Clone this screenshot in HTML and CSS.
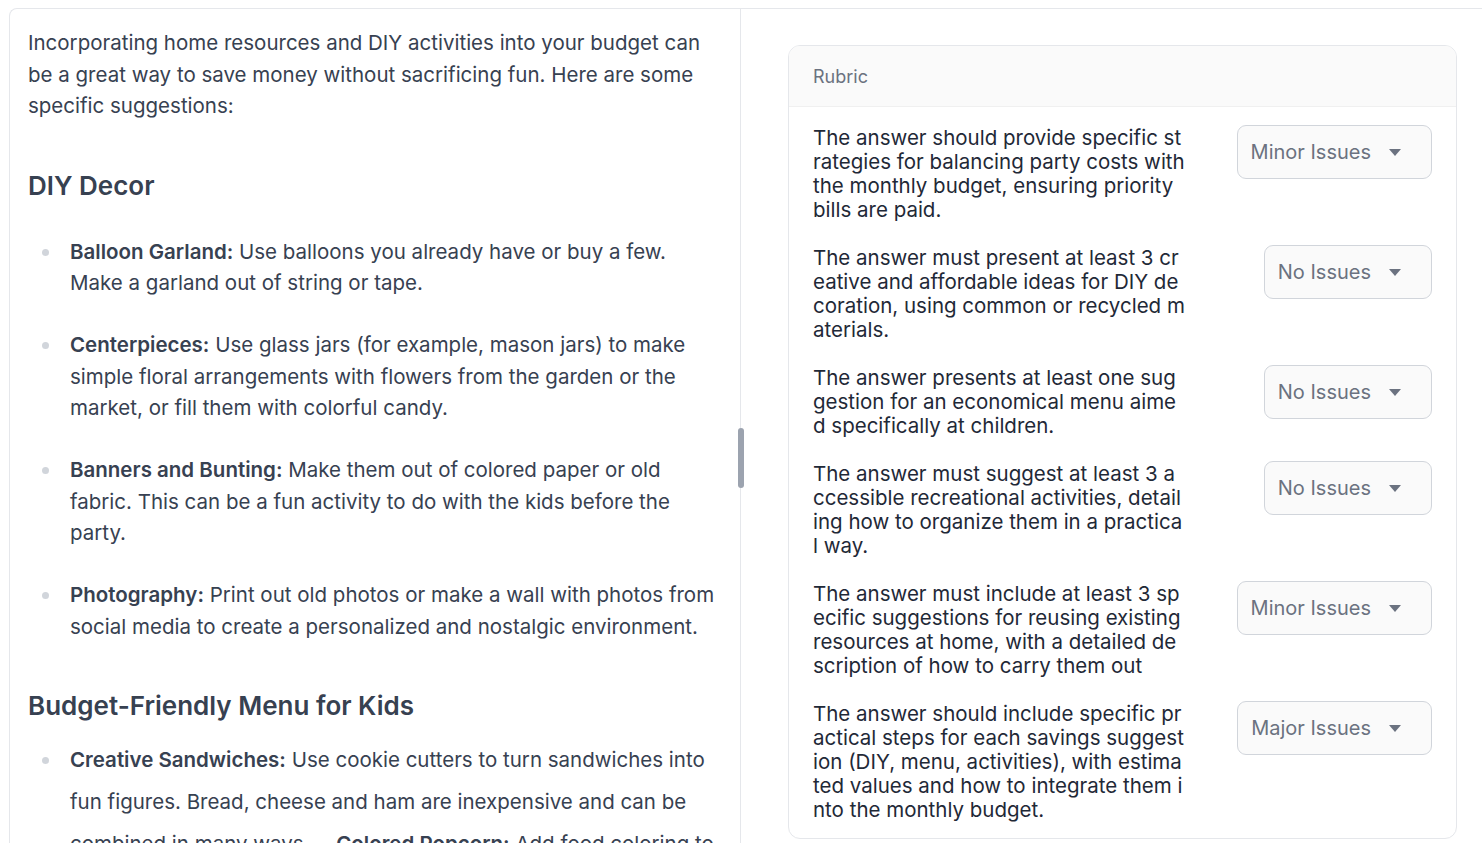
FILE: index.html
```html
<!DOCTYPE html>
<html lang="en">
<head>
<meta charset="utf-8">
<title>Rubric review</title>
<link rel="stylesheet" href="styles.css">
</head>
<body>
<div class="frame">
  <section class="answer">
    <div class="answer-scroll">
      <p class="intro">Incorporating home resources and DIY activities into your budget can be a great way to save money without sacrificing fun. Here are some specific suggestions:</p>
      <h2 class="h-first">DIY Decor</h2>
      <ul class="list list-first">
        <li><strong>Balloon Garland:</strong> Use balloons you already have or buy a few. Make a garland out of string or tape.</li>
        <li><strong>Centerpieces:</strong> Use glass jars (for example, mason jars) to make simple floral arrangements with flowers from the garden or the market, or fill them with colorful candy.</li>
        <li><strong>Banners and Bunting:</strong> Make them out of colored paper or old fabric. This can be a fun activity to do with the kids before the party.</li>
        <li><strong>Photography:</strong> Print out old photos or make a wall with photos from social media to create a personalized and nostalgic environment.</li>
      </ul>
      <h2 class="h-second">Budget-Friendly Menu for Kids</h2>
      <ul class="list list-second">
        <li><strong>Creative Sandwiches:</strong> Use cookie cutters to turn sandwiches into fun figures. Bread, cheese and ham are inexpensive and can be combined in many ways. &nbsp;- <strong>Colored Popcorn:</strong> Add food coloring to popcorn for a fun and colorful snack.</li>
      </ul>
    </div>
    <div class="scroll-thumb"></div>
  </section>
  <section class="review">
    <div class="card">
      <div class="card-head">Rubric</div>
      <div class="card-body">
        <div class="row">
          <div class="crit">The answer should provide specific strategies for balancing party costs with the monthly budget, ensuring priority bills are paid.</div>
          <div class="select">Minor Issues<span class="caret"></span></div>
        </div>
        <div class="row">
          <div class="crit">The answer must present at least 3 creative and affordable ideas for DIY decoration, using common or recycled materials.</div>
          <div class="select">No Issues<span class="caret"></span></div>
        </div>
        <div class="row">
          <div class="crit">The answer presents at least one suggestion for an economical menu aimed specifically at children.</div>
          <div class="select">No Issues<span class="caret"></span></div>
        </div>
        <div class="row">
          <div class="crit">The answer must suggest at least 3 accessible recreational activities, detailing how to organize them in a practical way.</div>
          <div class="select">No Issues<span class="caret"></span></div>
        </div>
        <div class="row">
          <div class="crit">The answer must include at least 3 specific suggestions for reusing existing resources at home, with a detailed description of how to carry them out</div>
          <div class="select">Minor Issues<span class="caret"></span></div>
        </div>
        <div class="row">
          <div class="crit">The answer should include specific practical steps for each savings suggestion (DIY, menu, activities), with estimated values and how to integrate them into the monthly budget.</div>
          <div class="select">Major Issues<span class="caret"></span></div>
        </div>
      </div>
    </div>
  </section>
</div>
</body>
</html>
```

FILE: styles.css
```css
* { box-sizing: border-box; }
html, body { margin: 0; padding: 0; background: #ffffff; overflow: hidden; }
body {
  font-family: Inter, "Noto Sans", "Liberation Sans", sans-serif;
  width: 1482px;
  height: 862px;
}
.frame {
  margin: 8px 0 0 9px;
  width: 1490px;
  height: 835px;
  border-top: 1px solid #e5e7eb;
  border-left: 1px solid #e5e7eb;
  border-top-left-radius: 8px;
  display: flex;
  overflow: hidden;
}
.answer {
  position: relative;
  width: 731px;
  flex: none;
  border-right: 1px solid #e5e7eb;
}
.answer-scroll {
  height: 100%;
  overflow: hidden;
  padding: 18px 18px 0 18px;
  color: #374151;
  font-size: 20.5px;
  line-height: 31.5px;
}
.intro { margin: 0; }
h2 {
  margin: 0;
  font-size: 26px;
  line-height: 34px;
  font-weight: 600;
  color: #374151;
}
.h-first { margin-top: 47px; }
.h-second { margin-top: 47px; }
.list {
  margin: 0;
  padding-left: 42px;
  list-style: none;
}
.list li { position: relative; }
.list li::before {
  content: "";
  position: absolute;
  left: -28px;
  top: 13px;
  width: 7px;
  height: 7px;
  border-radius: 50%;
  background: #d1d5db;
}
.list li + li { margin-top: 30.5px; }
.list strong { font-weight: 600; color: #374151; }
.list-first { margin-top: 33px; }
.list-second { margin-top: 16px; }
.list-second li { line-height: 42px; }
.list-second li::before { top: 18px; }
.scroll-thumb {
  position: absolute;
  right: -4px;
  top: 419px;
  width: 6px;
  height: 60px;
  border-radius: 3px;
  background: #9ca3af;
}
.review {
  flex: none;
  width: 700px;
  padding: 36px 0 0 47px;
}
.card {
  width: 669px;
  border: 1px solid #e5e7eb;
  border-radius: 12px;
  overflow: hidden;
  background: #ffffff;
}
.card-head {
  height: 61px;
  background: #fafafa;
  border-bottom: 1px solid #f0f0f0;
  padding: 0 24px;
  display: flex;
  align-items: center;
  font-size: 18px;
  color: #6b7280;
}
.card-body {
  padding: 19px 24px 16px;
  display: flex;
  flex-direction: column;
  gap: 24px;
}
.row {
  display: flex;
  justify-content: space-between;
  align-items: flex-start;
}
.crit {
  width: 372px;
  font-size: 20.5px;
  line-height: 24px;
  color: #1f2937;
  word-break: break-all;
}
.select {
  height: 54px;
  margin-top: -1px;
  padding: 0 30px 0 13px;
  border: 1px solid #d1d5db;
  border-radius: 9px;
  background: #fafafa;
  display: flex;
  align-items: center;
  gap: 18px;
  font-size: 20px;
  color: #6b7280;
}
.caret {
  width: 0;
  height: 0;
  border-left: 6.5px solid transparent;
  border-right: 6.5px solid transparent;
  border-top: 7px solid #6b7280;
}
```
